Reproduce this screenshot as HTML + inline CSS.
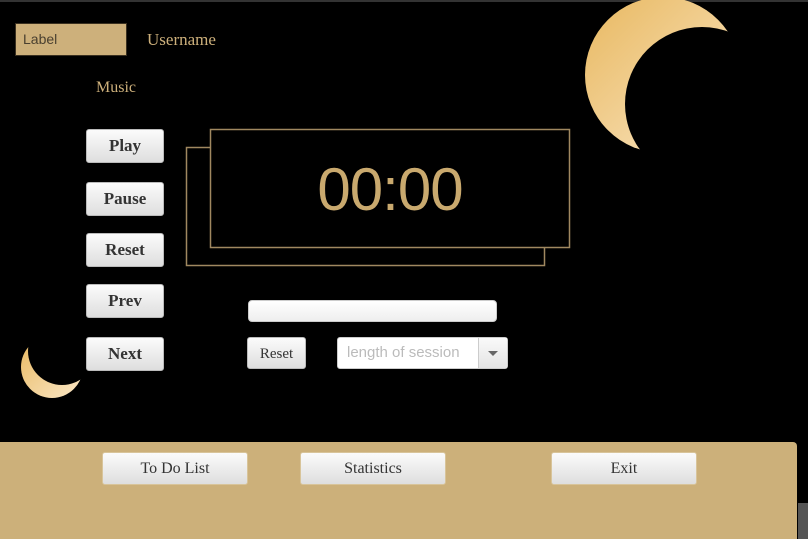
<!DOCTYPE html>
<html><head><style>
body{margin:0;width:808px;height:539px;background:#000;position:relative;overflow:hidden;font-family:"Liberation Serif",serif}
.a{position:absolute}
.btn{position:absolute;background:linear-gradient(#fbfbfb,#dedede);border:1px solid #bbb;border-radius:3px;box-sizing:border-box;text-align:center;color:#333;font-family:"Liberation Serif",serif}
.l{left:86px;width:78px;height:34px;line-height:32px;font-weight:bold;font-size:17px}
.b{width:146px;height:33px;line-height:31px;font-size:16px;top:452px;border-color:#d8c49a}
</style></head><body>
<div class="a" style="left:0;top:0;width:808px;height:2px;background:#333"></div>
<div class="a" style="left:15px;top:23px;width:112px;height:33px;background:#cdb07b;border:1px solid #3a3020;box-sizing:border-box;font-family:'Liberation Sans',sans-serif;font-size:14px;color:#4a4030;line-height:31px;padding-left:7px">Label</div>
<div class="a" style="left:147px;top:30px;color:#cdb07b;font-size:17px">Username</div>
<div class="a" style="left:96px;top:79px;color:#cdb07b;font-size:16px">Music</div>
<svg class="a" style="left:0;top:0" width="808" height="539">
<defs><linearGradient id="g" x1="0" y1="0" x2="1" y2="1"><stop offset="0" stop-color="#e8b860"/><stop offset="1" stop-color="#fbe8c8"/></linearGradient>
<mask id="m1"><rect width="808" height="539" fill="#fff"/><circle cx="702" cy="104" r="77" fill="#000"/></mask>
<mask id="m2"><rect width="808" height="539" fill="#fff"/><circle cx="62" cy="351" r="34" fill="#000"/></mask></defs>
<circle cx="663" cy="75" r="78" fill="url(#g)" mask="url(#m1)"/>
<circle cx="52" cy="367" r="31" fill="url(#g)" mask="url(#m2)"/>
<rect x="186.5" y="147.5" width="358" height="118" fill="none" stroke="#a08860" stroke-width="1.5"/>
<rect x="210.5" y="129.5" width="359" height="118" fill="#000" stroke="#a08860" stroke-width="1.5"/>
</svg>
<div class="a" style="left:210px;top:155px;width:360px;text-align:center;font-family:'Liberation Sans',sans-serif;font-size:60px;color:#c9a96e;letter-spacing:-1px;line-height:70px">00:00</div>
<div class="btn l" style="top:129px">Play</div>
<div class="btn l" style="top:182px">Pause</div>
<div class="btn l" style="top:233px">Reset</div>
<div class="btn l" style="top:284px">Prev</div>
<div class="btn l" style="top:337px">Next</div>
<div class="a" style="left:248px;top:300px;width:249px;height:22px;background:linear-gradient(#fff,#eee);border:1px solid #ccc;border-radius:4px;box-sizing:border-box"></div>
<div class="btn" style="left:247px;top:337px;width:59px;height:32px;line-height:32px;font-size:15px">Reset</div>
<div class="a" style="left:337px;top:337px;width:171px;height:32px;background:#fff;border:1px solid #ccc;border-radius:3px;box-sizing:border-box;font-family:'Liberation Sans',sans-serif;font-size:15px;color:#bbb;line-height:30px;padding-left:9px">length of session
<div class="a" style="right:0;top:0;width:28px;height:30px;border-left:1px solid #ccc;background:linear-gradient(#fafafa,#e4e4e4)"><div class="a" style="left:9px;top:13px;border:5px solid transparent;border-top-color:#666;border-bottom:0"></div></div></div>
<div class="a" style="left:0;top:442px;width:797px;height:97px;background:#ccb07a;border-radius:0 4px 0 0"></div>
<div class="a" style="left:798px;top:503px;width:10px;height:36px;background:#555"></div>
<div class="btn b" style="left:102px">To Do List</div>
<div class="btn b" style="left:300px">Statistics</div>
<div class="btn b" style="left:551px">Exit</div>
</body></html>
